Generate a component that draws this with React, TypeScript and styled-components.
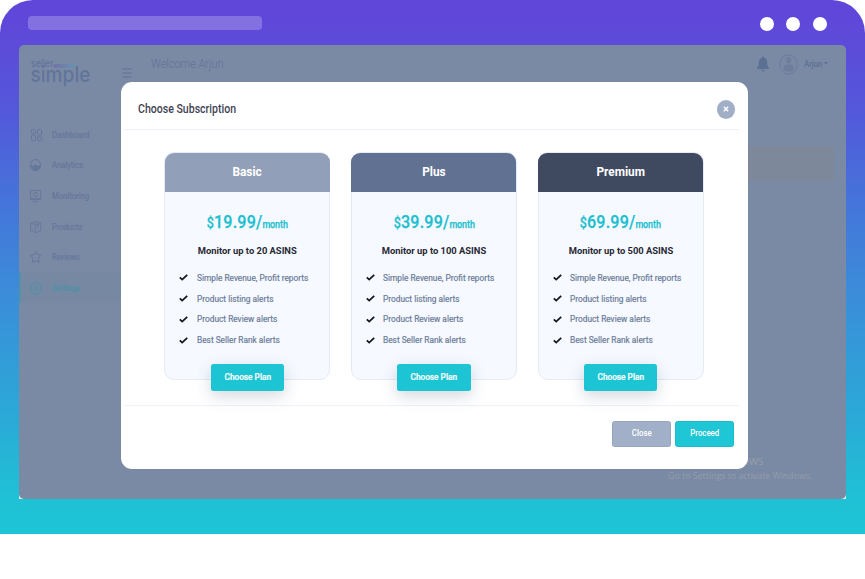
import React from "react";
import styled, { createGlobalStyle } from "styled-components";

const GlobalStyle = createGlobalStyle`
  * { box-sizing: border-box; }
  body { margin: 0; background: #fff; font-family: Roboto, "Liberation Sans", sans-serif; }
  h1, h2, h3, p, ul { margin: 0; padding: 0; font-weight: 400; }
  ul { list-style: none; }
  button { font-family: inherit; border: 0; padding: 0; }
`;

const Frame = styled.div`
  width: 864.5px;
  height: 534px;
  padding: 0 19px;
  border-radius: 33px 33px 0 0;
  background: linear-gradient(180deg, #6045d9 0, #5d4bd9 45px, #5359da 115px, #4574da 200px, #3a8ed9 300px, #2aaad7 420px, #1fc1d5 498px, #1dc5d5 534px);
`;

const WindowBar = styled.div`
  height: 45px;
  padding: 1px 18.5px 0 9px;
  display: flex;
  align-items: center;
  justify-content: space-between;
`;

const Address = styled.div`
  width: 234px;
  height: 14px;
  border-radius: 4px;
  background: #8371e2;
`;

const Dots = styled.div`
  display: flex;
  gap: 12.6px;
  margin-top: 1px;
`;

const Dot = styled.i`
  width: 14px;
  height: 14px;
  border-radius: 50%;
  background: #fff;
`;

const ScreenEdge = styled.div`
  position: relative;
  width: 827px;
  height: 454px;
  border-radius: 5px 5px 0 0;
  background: linear-gradient(180deg, transparent 20px, #e6eff5 448px);
`;

const Screen = styled.div`
  width: 827px;
  height: 454.4px;
  display: flex;
  border-radius: 5px;
  overflow: hidden;
  background: #7a8aa5;
  color: #64769a;
`;

const Sidebar = styled.aside`
  width: 120px;
`;

const Brand = styled.div`
  height: 74.5px;
  padding: 9px 0 0 11px;
  display: flex;
`;

const Logo = styled.svg`
  width: 64px;
  height: 50px;
  display: block;
`;

const Burger = styled.svg`
  width: 10px;
  height: 10px;
  margin: 14px 0 0 27.5px;
  flex: none;
`;

const NavItem = styled.li<{ $active?: boolean }>`
  height: 30.6px;
  padding-left: 9px;
  display: flex;
  align-items: center;
  border-left: 2px solid ${(p) => (p.$active ? "#5592a7" : "transparent")};
  background: ${(p) => (p.$active ? "#7688a2" : "transparent")};
  color: ${(p) => (p.$active ? "#4e92a8" : "#65779a")};
  svg { width: 13px; height: 14px; margin-right: 9px; flex: none; }
`;

const Text = styled.span<{ $x?: number; $origin?: string }>`
  display: inline-block;
  white-space: nowrap;
  transform: scaleX(${(p) => p.$x ?? 1});
  transform-origin: ${(p) => p.$origin ?? "left"} center;
`;

const NavLabel = styled(Text)`
  font-size: 9px;
  line-height: 12px;
  -webkit-text-stroke: 0.2px currentColor;
`;

const Main = styled.main`
  flex: 1;
  display: flex;
  flex-direction: column;
`;

const TopBar = styled.header`
  height: 38px;
  padding: 0 18px 0 12px;
  display: flex;
  align-items: center;
`;

const Welcome = styled.h1`
  flex: 1;
  font-size: 13.5px;
  font-weight: 300;
  line-height: 18px;
  margin-top: -2px;
  -webkit-text-stroke: 0.1px currentColor;
`;

const BellIcon = styled.svg`
  width: 12px;
  height: 16px;
  margin-right: 10.5px;
`;

const Avatar = styled.svg`
  width: 19px;
  height: 21px;
  margin-right: 6px;
`;

const User = styled.span`
  width: 20px;
  font-size: 9px;
  margin-top: -1px;
  color: #5c7093;
  -webkit-text-stroke: 0.2px currentColor;
`;

const Caret = styled.svg`
  width: 4px;
  height: 3px;
  margin-top: -2px;
`;

const Notice = styled.div`
  height: 35px;
  margin: 63px 12px 0 400px;
  border-radius: 2px;
  background: #7d899b;
`;

const Watermark = styled.div`
  margin: auto 35px 16px auto;
  width: 143px;
  color: #959ca8;
  font-family: "Open Sans", "Noto Sans", sans-serif;
`;

const WatermarkTitle = styled.p`
  font-size: 12px;
  line-height: 15px;
`;

const WatermarkLine = styled.p`
  font-size: 9.5px;
  line-height: 15px;
`;

const Modal = styled.section`
  position: absolute;
  left: 102px;
  top: 37px;
  width: 627px;
  height: 387px;
  padding: 0 9px 0 3px;
  border-radius: 11px;
  background: #fff;
  display: flex;
  flex-direction: column;
`;

const ModalHeader = styled.header`
  height: 48px;
  padding: 7px 4px 0 14px;
  display: flex;
  align-items: center;
  justify-content: space-between;
  border-bottom: 1px solid #eff2fb;
`;

const ModalTitle = styled.h2`
  font-size: 12px;
  font-weight: 500;
  color: #3f4254;
  line-height: 16px;
`;

const CloseRound = styled.button`
  width: 18px;
  height: 19px;
  border-radius: 50%;
  background: #a0aec8;
  display: grid;
  place-items: center;
  svg { width: 6px; height: 6px; }
`;

const Plans = styled.div`
  height: 276px;
  padding: 22px 0 0 40.4px;
  display: flex;
  gap: 20.6px;
  border-bottom: 1px solid #eff2fb;
`;

const Card = styled.article`
  width: 166px;
  height: 228px;
  border: 1px solid #e4ebf5;
  border-radius: 10px;
  background: #f6f9ff;
  display: flex;
  flex-direction: column;
  align-items: center;
`;

const CardHead = styled.header<{ $tone: string }>`
  width: calc(100% + 1px);
  height: 39px;
  margin-top: -0.5px;
  flex: none;
  border-radius: 9px 9px 0 0;
  background: ${(p) => p.$tone};
  color: #fff;
  font-size: 13px;
  font-weight: 700;
  line-height: 38px;
  text-align: center;
`;

const Price = styled.div`
  margin-top: 17px;
  height: 26px;
  line-height: 26px;
  color: #1dbfd0;
  font-size: 18px;
  font-weight: 500;
  white-space: nowrap;
  -webkit-text-stroke: 0.25px #1dbfd0;
`;

const Amount = styled.span`
  letter-spacing: 0.25px;
`;

const Dollar = styled.span`
  font-size: 14px;
`;

const Per = styled.span`
  font-size: 10px;
  letter-spacing: -0.1px;
`;

const Limit = styled.h3`
  margin-top: 8px;
  height: 16px;
  line-height: 16px;
  font-size: 9.5px;
  font-weight: 700;
  color: #262a35;
`;

const Features = styled.ul`
  width: 100%;
  margin-top: 9px;
  padding-left: 14px;
`;

const Feature = styled.li`
  height: 20.8px;
  display: flex;
  align-items: center;
  color: #6b7c99;
  font-size: 8.8px;
  -webkit-text-stroke: 0.2px #6b7c99;
  svg { width: 9px; height: 7px; margin-right: 8.5px; flex: none; }
`;

const ChooseButton = styled.button`
  width: 73.5px;
  height: 27.5px;
  flex: none;
  margin-top: 13px;
  border-radius: 2.5px;
  background: #1dc5d4;
  box-shadow: 0 5px 16px rgba(60, 75, 110, 0.22);
  color: #fff;
  font-size: 8.8px;
  font-weight: 500;
  -webkit-text-stroke: 0.2px #fff;
`;

const ModalFooter = styled.footer`
  flex: 1;
  padding: 15px 5.5px 0 0;
  display: flex;
  justify-content: flex-end;
  gap: 4.5px;
`;

const FooterButton = styled.button<{ $primary?: boolean }>`
  width: 58.5px;
  height: 25.5px;
  padding-bottom: 2px;
  border: 1px solid ${(p) => (p.$primary ? "#19bccb" : "#95a4c0")};
  border-radius: 2.5px;
  background: ${(p) => (p.$primary ? "#1fc6d5" : "#a2afc9")};
  color: #fff;
  font-size: 8.5px;
  font-weight: 500;
`;

const Stroke = ({ children }: { children: React.ReactNode }) => (
  <svg viewBox="0 0 13 14" fill="none" stroke="currentColor" strokeWidth="1">{children}</svg>
);

const nav = [
  {
    label: "Dashboard", x: 0.86,
    icon: <Stroke><rect x="1.5" y="1.5" width="4" height="3.8" rx="1" /><rect x="1.5" y="7" width="4" height="5.7" rx="1" /><rect x="7.5" y="1.5" width="4" height="5.7" rx="1" /><rect x="7.5" y="9" width="4" height="3.7" rx="1" /></Stroke>,
  },
  {
    label: "Analytics", x: 0.85,
    icon: <Stroke><ellipse cx="5.5" cy="7" rx="5" ry="5.6" /><path d="M.7 7.5 3.5 8.5 5.5 6.5 7.6 8.5 10.3 7.5C10 10.5 8 12.5 5.5 12.5S1 10.5.7 7.5Z" fill="currentColor" /></Stroke>,
  },
  {
    label: "Monitoring", x: 0.855,
    icon: <Stroke><rect x=".5" y="1.5" width="10.2" height="9.2" rx=".6" /><path d="M.5 9.7h10.2M3 12.7h5" /><ellipse cx="5.6" cy="5.6" rx="1.8" ry="2.2" /></Stroke>,
  },
  {
    label: "Products", x: 0.84,
    icon: <Stroke><path d="M5.7 1.3 10.7 3.2v7.3l-5 2.2-5-2.2V3.2ZM.8 3.3l4.9 2 4.9-2M5.7 5.3v7.2M3 2.5l5 2v2.7M2.2 9l1.6.7" strokeWidth=".8" /></Stroke>,
  },
  {
    label: "Reviews", x: 0.84,
    icon: <Stroke><path d="M5.7 1.5 7.2 4.6 10.8 5.3 8.5 8.2 9 12.2 5.7 10.8 2.4 12.2 2.9 8.2.6 5.3 4.2 4.6Z" strokeLinejoin="round" /></Stroke>,
  },
  {
    label: "Settings", x: 0.86, active: true,
    icon: <Stroke><path d="M4.9 1.2h1.7l.4 1.5 1 .5 1.4-.7 1.1 1.3-.7 1.4.3 1.1 1 .3v1.8l-1.2.4-.4 1 .7 1.4-1.2 1.2-1.3-.7-.9.4-.4 1.4H4.8l-.4-1.4-.9-.4-1.3.7L1 11.2l.7-1.4-.4-1L.3 8.4V6.6l1-.3.3-1.1L.9 3.8 2 2.5l1.4.7 1-.5Z" strokeLinejoin="round" /><ellipse cx="5.7" cy="7.4" rx="1.8" ry="2" /></Stroke>,
  },
];

const features = [
  "Simple Revenue, Profit reports",
  "Product listing alerts",
  "Product Review alerts",
  "Best Seller Rank alerts",
];

const plans = [
  { name: "Basic", price: "19.99", limit: 20, tone: "#929fb9" },
  { name: "Plus", price: "39.99", limit: 100, tone: "#617192" },
  { name: "Premium", price: "69.99", limit: 500, tone: "#3f4a60" },
];

const Check = () => (
  <svg viewBox="0 0 9 7" fill="none" stroke="#15171f" strokeWidth="1.8"><path d="M.8 3.3 3.2 5.6 8.2.9" /></svg>
);

export default function App() {
  return (
    <>
      <GlobalStyle />
      <Frame>
        <WindowBar>
          <Address />
          <Dots><Dot /><Dot /><Dot /></Dots>
        </WindowBar>
        <ScreenEdge>
          <Screen>
            <Sidebar>
              <Brand>
                <Logo viewBox="0 0 64 50" fontFamily="Inter, sans-serif" fill="#61749a">
                  <defs>
                    <linearGradient id="brandBar">
                      <stop offset="0" stopColor="#7169a8" />
                      <stop offset="1" stopColor="#6196b4" />
                    </linearGradient>
                  </defs>
                  <text x="1" y="12.5" fontSize="10" fontWeight="500" textLength="22.5" lengthAdjust="spacingAndGlyphs">seller</text>
                  <rect x="23.5" y="10.2" width="21.5" height="3.4" fill="url(#brandBar)" opacity=".8" />
                  <text x="0.5" y="28.3" fontSize="22" fontWeight="500" textLength="60" lengthAdjust="spacingAndGlyphs">simple</text>
                </Logo>
                <Burger viewBox="0 0 10 10" stroke="#5f7294" strokeWidth="1.2"><path d="M.5 1h9M.5 5h9M.5 9h9" /></Burger>
              </Brand>
              <ul>
                {nav.map((n) => (
                  <NavItem key={n.label} $active={n.active}>
                    {n.icon}
                    <NavLabel $x={n.x}>{n.label}</NavLabel>
                  </NavItem>
                ))}
              </ul>
            </Sidebar>
            <Main>
              <TopBar>
                <Welcome><Text $x={0.81}>Welcome Arjun</Text></Welcome>
                <BellIcon viewBox="0 0 12 16" fill="#5c7093">
                  <path d="M5.2.5h1.6v1.2C9 2.1 10.2 4 10.2 6.5c0 3.4.5 4.3 1.8 5.4v1H0v-1c1.3-1.1 1.8-2 1.8-5.4C1.8 4 3 2.1 5.2 1.7ZM4.3 13.8h3.4C7.5 15 6.9 15.6 6 15.6S4.5 15 4.3 13.8Z" />
                </BellIcon>
                <Avatar viewBox="0 0 19 21">
                  <ellipse cx="9.5" cy="10.5" rx="8.7" ry="9.6" fill="none" stroke="#6a7c9c" />
                  <ellipse cx="9.5" cy="6.2" rx="2.7" ry="3.2" fill="#6e7f9c" />
                  <path d="M4.3 14.5C4.3 11.5 6 10.2 9.5 10.2S14.7 11.5 14.7 14.5 12.8 17.5 9.5 17.5 4.3 17 4.3 14.5Z" fill="#6e7f9c" />
                </Avatar>
                <User><Text $x={0.88}>Arjun</Text></User>
                <Caret viewBox="0 0 4 3"><path d="M0 0h4L2 2.5Z" fill="#5c7093" /></Caret>
              </TopBar>
              <Notice />
              <Watermark>
                <WatermarkTitle><Text $x={0.97}>Activate Windows</Text></WatermarkTitle>
                <WatermarkLine><Text $x={0.927}>Go to Settings to activate Windows.</Text></WatermarkLine>
              </Watermark>
            </Main>
          </Screen>
          <Modal>
            <ModalHeader>
              <ModalTitle><Text $x={0.88}>Choose Subscription</Text></ModalTitle>
              <CloseRound aria-label="Close dialog">
                <svg viewBox="0 0 7 7" stroke="#fff" strokeWidth="1.7"><path d="M1 1l5 5M6 1 1 6" /></svg>
              </CloseRound>
            </ModalHeader>
            <Plans>
              {plans.map((p) => (
                <Card key={p.name}>
                  <CardHead $tone={p.tone}><Text $x={0.91} $origin="center">{p.name}</Text></CardHead>
                  <Price>
                    <Text $x={0.895} $origin="center"><Dollar>$</Dollar><Amount>{p.price}</Amount>/<Per>month</Per></Text>
                  </Price>
                  <Limit><Text $x={0.985} $origin="center">Monitor up to {p.limit} ASINS</Text></Limit>
                  <Features>
                    {features.map((f) => (
                      <Feature key={f}><Check /><Text $x={0.945}>{f}</Text></Feature>
                    ))}
                  </Features>
                  <ChooseButton><Text $x={0.94} $origin="center">Choose Plan</Text></ChooseButton>
                </Card>
              ))}
            </Plans>
            <ModalFooter>
              <FooterButton><Text $x={0.92} $origin="center">Close</Text></FooterButton>
              <FooterButton $primary><Text $x={0.92} $origin="center">Proceed</Text></FooterButton>
            </ModalFooter>
          </Modal>
        </ScreenEdge>
      </Frame>
    </>
  );
}
